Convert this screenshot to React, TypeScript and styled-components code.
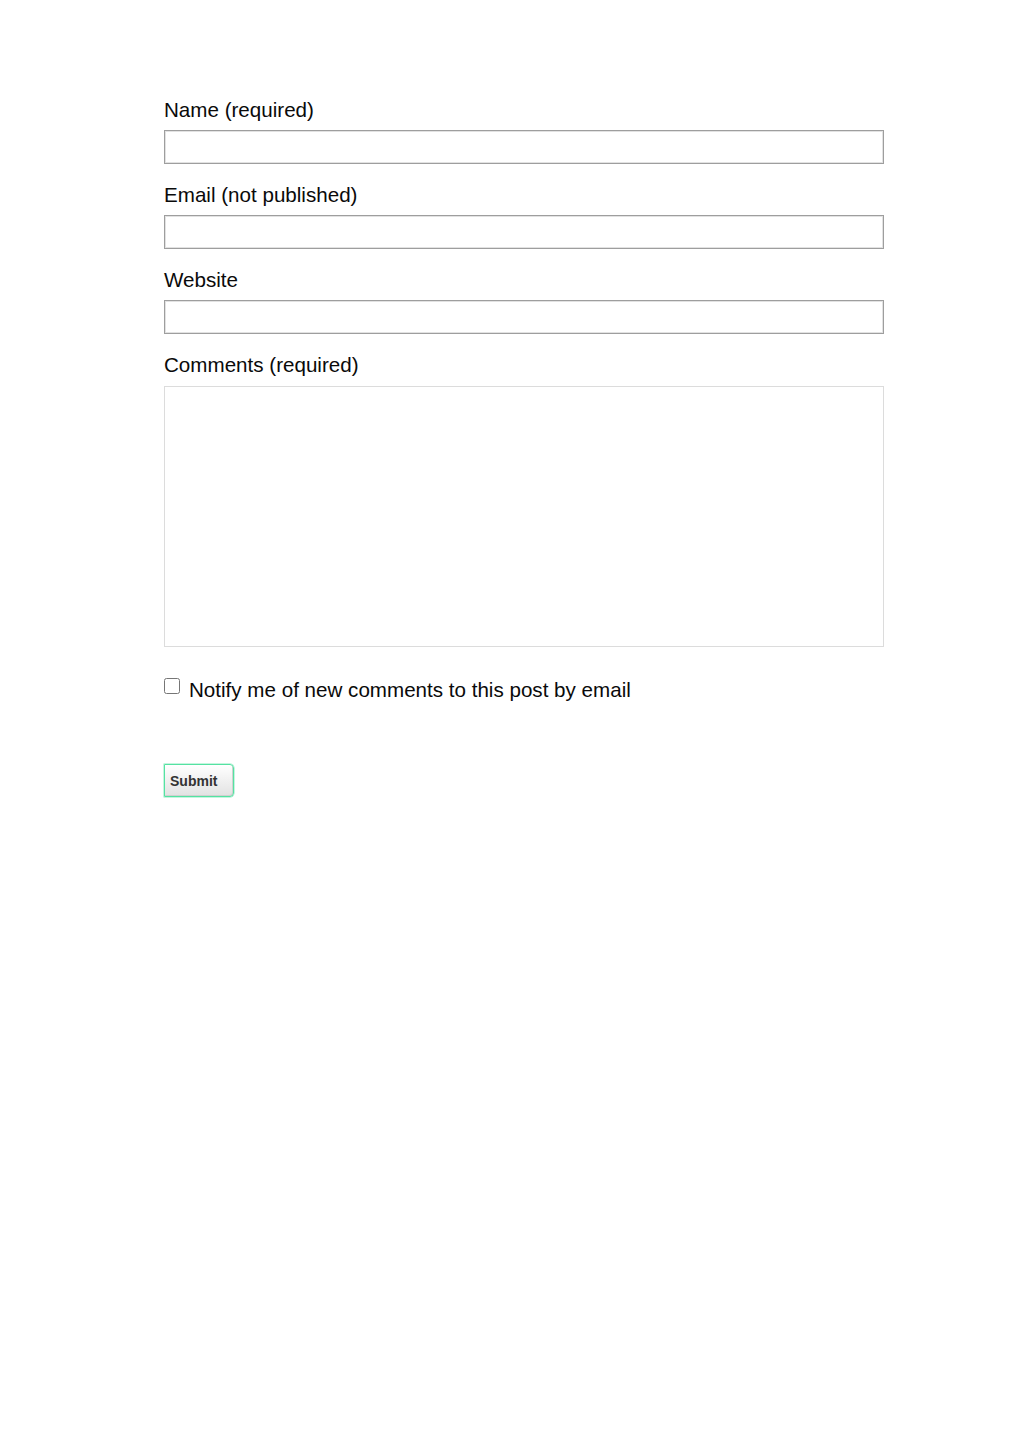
import styled, { createGlobalStyle } from 'styled-components';

const GlobalStyle = createGlobalStyle`
  html, body {
    margin: 0;
    padding: 0;
    background: #fff;
  }
  body {
    font-family: "Liberation Sans", Arial, sans-serif;
    color: #0a0a0a;
  }
`;

const Page = styled.div`
  width: 1024px;
  min-height: 1449px;
  padding: 98px 0 0 164px;
  box-sizing: border-box;
`;

const Form = styled.form`
  width: 720px;
  display: flex;
  flex-direction: column;
`;

const Field = styled.div`
  display: flex;
  flex-direction: column;
  margin-bottom: 19px;
`;

const Label = styled.label<{ $gap?: number }>`
  font-size: 20.6px;
  line-height: 23px;
  margin-bottom: ${({ $gap }) => $gap ?? 9}px;
`;

const TextInput = styled.input`
  height: 34px;
  box-sizing: border-box;
  border: 1px solid #9e9e9e;
  box-shadow: inset 0 0 0 1px #e2e2e2;
  padding: 4px 6px;
  font-size: 16px;
  font-family: inherit;
  outline: none;
`;

const TextArea = styled.textarea`
  height: 261px;
  box-sizing: border-box;
  border: 1px solid #dcdcdc;
  resize: none;
  padding: 6px;
  font-size: 16px;
  font-family: inherit;
  outline: none;
`;

const CheckRow = styled.label`
  display: flex;
  align-items: flex-start;
  gap: 9px;
  font-size: 20.6px;
  line-height: 23px;
  margin-top: 12px;
`;

const Check = styled.input`
  width: 16px;
  height: 16px;
  margin: 0;
  margin-top: 0;
  accent-color: #555;
`;

const SubmitButton = styled.button`
  align-self: flex-start;
  margin-top: 63px;
  width: 70px;
  height: 33px;
  padding: 0 0 0 5px;
  text-align: left;
  border: 1px solid #55e2a2;
  border-radius: 0 4px 4px 0;
  background: linear-gradient(#ffffff, #e2e2e2);
  box-shadow: inset -1px -1px 0 #d0d0d0, 0 0 0 0.5px #8cecc0;
  font-family: "Liberation Sans", Arial, sans-serif;
  font-weight: bold;
  font-size: 14px;
  color: #333;
  cursor: pointer;
`;

export default function App() {
  return (
    <>
      <GlobalStyle />
      <Page>
        <Form onSubmit={(e) => e.preventDefault()}>
          <Field>
            <Label htmlFor='name'>Name (required)</Label>
            <TextInput id='name' type='text' />
          </Field>
          <Field>
            <Label htmlFor='email'>Email (not published)</Label>
            <TextInput id='email' type='email' />
          </Field>
          <Field>
            <Label htmlFor='website'>Website</Label>
            <TextInput id='website' type='text' />
          </Field>
          <Field>
            <Label htmlFor='comments' $gap={10}>
              Comments (required)
            </Label>
            <TextArea id='comments' />
          </Field>
          <CheckRow>
            <Check type='checkbox' />
            Notify me of new comments to this post by email
          </CheckRow>
          <SubmitButton type='submit'>Submit</SubmitButton>
        </Form>
      </Page>
    </>
  );
}
